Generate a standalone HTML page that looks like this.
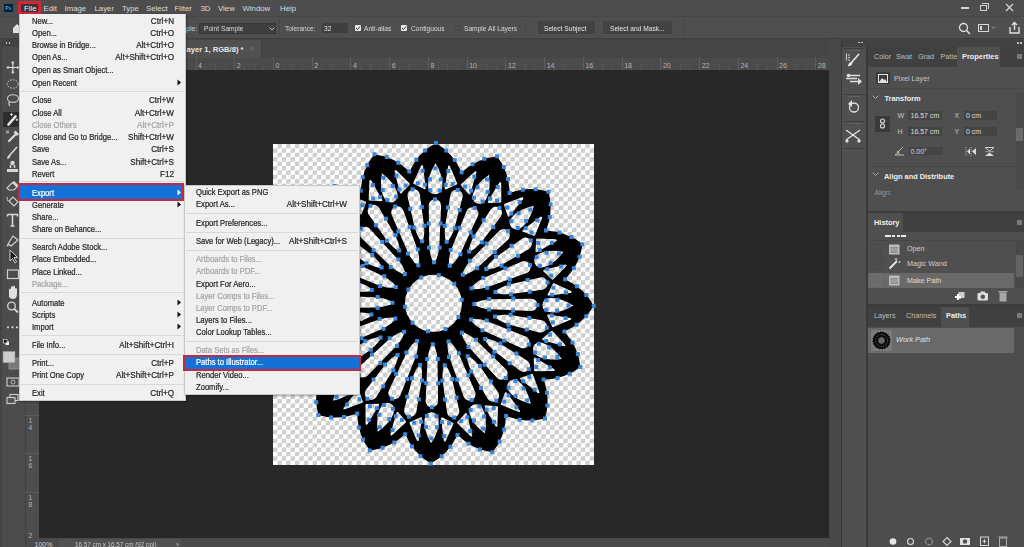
<!DOCTYPE html>
<html><head><meta charset="utf-8"><style>
*{margin:0;padding:0;box-sizing:border-box}
html,body{width:1024px;height:547px;overflow:hidden;background:#535353;font-family:"Liberation Sans",sans-serif;position:relative}
.a{position:absolute}
.t{position:absolute;white-space:nowrap;line-height:1}
svg{position:absolute;overflow:visible}
</style></head><body>
<div class="a" style="left:0px;top:0px;width:1024px;height:16px;background:#4d4d4d;"></div>
<div class="a" style="left:0px;top:16px;width:1024px;height:1px;background:#474747;"></div>
<div class="a" style="left:0px;top:17px;width:1024px;height:21px;background:#4f4f4f;"></div>
<div class="a" style="left:0px;top:38px;width:1024px;height:1px;background:#3e3e3e;"></div>
<div class="a" style="left:20px;top:39px;width:809px;height:19px;background:#454545;"></div>
<div class="a" style="left:20px;top:40px;width:241px;height:18px;background:#505050;"></div>
<div class="a" style="left:261px;top:40px;width:1px;height:18px;background:#3d3d3d;"></div>
<div class="a" style="left:25px;top:58px;width:804px;height:12px;background:#4b4b4b;"></div>
<div class="a" style="left:26px;top:70px;width:13px;height:468px;background:#4d4d4d;"></div>
<div class="a" style="left:39px;top:70px;width:790px;height:468px;background:#282828;"></div>
<div class="a" style="left:0px;top:39px;width:25px;height:508px;background:#4c4c4c;"></div>
<div class="a" style="left:0px;top:39px;width:1.5px;height:508px;background:#444444;"></div>
<div class="a" style="left:0px;top:39px;width:25px;height:8px;background:#424242;"></div>
<div class="a" style="left:25px;top:39px;width:1px;height:508px;background:#404040;"></div>
<div class="a" style="left:26px;top:538px;width:803px;height:9px;background:#4a4a4a;"></div>
<div class="a" style="left:59px;top:539px;width:122px;height:8px;background:#525252;"></div>
<div class="a" style="left:829px;top:39px;width:12px;height:508px;background:#484848;"></div>
<div class="a" style="left:841px;top:39px;width:26px;height:508px;background:#505050;"></div>
<div class="a" style="left:841px;top:39px;width:183px;height:8px;background:#424242;"></div>
<div class="a" style="left:841px;top:39px;width:1px;height:508px;background:#3a3a3a;"></div>
<div class="a" style="left:866px;top:47px;width:2px;height:500px;background:#3a3a3a;"></div>
<div class="a" style="left:868px;top:47px;width:156px;height:20px;background:#404040;"></div>
<div class="a" style="left:957px;top:47px;width:43px;height:20px;background:#4f4f4f;"></div>
<div class="a" style="left:868px;top:67px;width:156px;height:144px;background:#4f4f4f;"></div>
<div class="a" style="left:868px;top:211px;width:156px;height:2px;background:#3c3c3c;"></div>
<div class="a" style="left:868px;top:213px;width:156px;height:19px;background:#404040;"></div>
<div class="a" style="left:868px;top:213px;width:35px;height:19px;background:#4f4f4f;"></div>
<div class="a" style="left:868px;top:232px;width:156px;height:72px;background:#4f4f4f;"></div>
<div class="a" style="left:868px;top:304px;width:156px;height:3px;background:#3c3c3c;"></div>
<div class="a" style="left:868px;top:307px;width:156px;height:20px;background:#404040;"></div>
<div class="a" style="left:941px;top:307px;width:28px;height:20px;background:#4f4f4f;"></div>
<div class="a" style="left:868px;top:327px;width:156px;height:220px;background:#4d4d4d;"></div>
<div class="a" style="left:17.8px;top:0.8px;width:23.1px;height:12.9px;background:#3a3434;border:3px solid #d0283a;border-bottom-width:2.4px"></div>
<div class="a" style="left:4px;top:4px;width:9px;height:8px;background:#001e36;border-radius:1px"></div>
<div class="t" style="left:5.20px;top:6.20px;font-size:5.2px;color:#31a8ff;font-weight:bold;">Ps</div>
<div class="t" style="left:24.00px;top:5.30px;font-size:7.8px;color:#f0f0f0;">File</div>
<div class="t" style="left:43.50px;top:5.30px;font-size:7.8px;color:#dcdcdc;">Edit</div>
<div class="t" style="left:64.50px;top:5.30px;font-size:7.8px;color:#dcdcdc;">Image</div>
<div class="t" style="left:94.50px;top:5.30px;font-size:7.8px;color:#dcdcdc;">Layer</div>
<div class="t" style="left:122.00px;top:5.30px;font-size:7.8px;color:#dcdcdc;">Type</div>
<div class="t" style="left:146.00px;top:5.30px;font-size:7.8px;color:#dcdcdc;">Select</div>
<div class="t" style="left:174.50px;top:5.30px;font-size:7.8px;color:#dcdcdc;">Filter</div>
<div class="t" style="left:200.50px;top:5.30px;font-size:7.8px;color:#dcdcdc;">3D</div>
<div class="t" style="left:218.00px;top:5.30px;font-size:7.8px;color:#dcdcdc;">View</div>
<div class="t" style="left:242.50px;top:5.30px;font-size:7.8px;color:#dcdcdc;">Window</div>
<div class="t" style="left:280.00px;top:5.30px;font-size:7.8px;color:#dcdcdc;">Help</div>
<div class="a" style="left:961px;top:7px;width:8px;height:1.5px;background:#d8d8d8;"></div>
<div class="a" style="left:980px;top:5px;width:7px;height:6px;background:transparent;border:1px solid #d0d0d0"></div>
<div class="a" style="left:982px;top:3px;width:7px;height:6px;background:transparent;border-top:1px solid #d0d0d0;border-right:1px solid #d0d0d0"></div>
<svg style="left:1005px;top:3px" width="9" height="9"><path d="M1 1L8 8M8 1L1 8" stroke="#d8d8d8" stroke-width="1.2"/></svg>
<svg style="left:13px;top:24px" width="8" height="10"><path d="M4 0L8 4V9H0V4Z" fill="#e0e0e0"/></svg>
<div class="t" style="left:186.00px;top:25.20px;font-size:7px;color:#c8c8c8;">ple:</div>
<div class="a" style="left:199px;top:22.5px;width:77px;height:11.5px;background:#3f3f3f;border:1px solid #383838"></div>
<div class="t" style="left:204.00px;top:25.00px;font-size:7.3px;color:#d8d8d8;transform:scaleX(0.91);transform-origin:0 0;">Point Sample</div>
<svg style="left:269px;top:27px" width="6" height="4"><path d="M0.5 0.5L3 3L5.5 0.5" stroke="#bbb" fill="none"/></svg>
<div class="a" style="left:279px;top:19px;width:1px;height:17px;background:#474747;"></div>
<div class="t" style="left:285.00px;top:24.60px;font-size:7.3px;color:#d2d2d2;transform:scaleX(0.91);transform-origin:0 0;">Tolerance:</div>
<div class="a" style="left:321.5px;top:23px;width:26.5px;height:10px;background:#3f3f3f;"></div>
<div class="t" style="left:323.50px;top:24.80px;font-size:7.3px;color:#e6e6e6;transform:scaleX(0.91);transform-origin:0 0;">32</div>
<div class="a" style="left:354.5px;top:24.5px;width:6.5px;height:6.5px;background:#e8e8e8;border-radius:1px"></div>
<svg style="left:355px;top:25px" width="6" height="6"><path d="M1 3L2.5 4.5L5 1.5" stroke="#333" stroke-width="1" fill="none"/></svg>
<div class="t" style="left:364.00px;top:25.00px;font-size:7.3px;color:#d8d8d8;transform:scaleX(0.91);transform-origin:0 0;">Anti-alias</div>
<div class="a" style="left:400.5px;top:24.5px;width:6.5px;height:6.5px;background:#e8e8e8;border-radius:1px"></div>
<svg style="left:401px;top:25px" width="6" height="6"><path d="M1 3L2.5 4.5L5 1.5" stroke="#333" stroke-width="1" fill="none"/></svg>
<div class="t" style="left:410.50px;top:25.00px;font-size:7.3px;color:#d8d8d8;transform:scaleX(0.91);transform-origin:0 0;">Contiguous</div>
<div class="a" style="left:454.5px;top:24.5px;width:6px;height:6px;background:transparent;border:1px solid #444;border-radius:50%"></div>
<div class="t" style="left:463.50px;top:25.00px;font-size:7.3px;color:#d8d8d8;transform:scaleX(0.91);transform-origin:0 0;">Sample All Layers</div>
<div class="a" style="left:525px;top:19px;width:1px;height:17px;background:#474747;"></div>
<div class="a" style="left:537.5px;top:21.3px;width:57px;height:12.5px;background:#424242;"></div>
<div class="t" style="left:544.00px;top:24.80px;font-size:7.3px;color:#e6e6e6;transform:scaleX(0.91);transform-origin:0 0;">Select Subject</div>
<div class="a" style="left:602.7px;top:21.3px;width:69px;height:12.5px;background:#424242;"></div>
<div class="t" style="left:609.70px;top:24.80px;font-size:7.3px;color:#e6e6e6;transform:scaleX(0.91);transform-origin:0 0;">Select and Mask...</div>
<div class="a" style="left:683px;top:19px;width:1px;height:17px;background:#474747;"></div>
<svg style="left:958px;top:22px" width="14" height="13"><circle cx="5.5" cy="5.5" r="4" stroke="#e0e0e0" stroke-width="1.3" fill="none"/><path d="M8.5 8.5L12 12" stroke="#e0e0e0" stroke-width="1.5"/></svg>
<div class="a" style="left:978px;top:24px;width:11px;height:8px;background:transparent;border:1px solid #d8d8d8"></div>
<div class="a" style="left:980px;top:26px;width:2px;height:4px;background:#d8d8d8;"></div>
<svg style="left:991px;top:26px" width="5" height="4"><path d="M0.5 0.5L2.5 2.5L4.5 0.5" stroke="#999" fill="none"/></svg>
<svg style="left:1008px;top:21px" width="13" height="13"><path d="M2 6V12H11V6" stroke="#e0e0e0" stroke-width="1.4" fill="none"/><path d="M6.5 9V1.5M4 4L6.5 1.5L9 4" stroke="#e0e0e0" stroke-width="1.4" fill="none"/></svg>
<div class="a" style="left:196px;top:57px;width:1px;height:13px;background:#5c5c5c;"></div>
<div class="a" style="left:205px;top:67px;width:1px;height:3px;background:#575757;"></div>
<div class="a" style="left:215px;top:64px;width:1px;height:6px;background:#575757;"></div>
<div class="a" style="left:225px;top:67px;width:1px;height:3px;background:#575757;"></div>
<div class="t" style="left:198.02px;top:61.50px;font-size:7px;color:#b4b4b4;">4</div>
<div class="a" style="left:234px;top:57px;width:1px;height:13px;background:#5c5c5c;"></div>
<div class="a" style="left:244px;top:67px;width:1px;height:3px;background:#575757;"></div>
<div class="a" style="left:254px;top:64px;width:1px;height:6px;background:#575757;"></div>
<div class="a" style="left:263px;top:67px;width:1px;height:3px;background:#575757;"></div>
<div class="t" style="left:236.76px;top:61.50px;font-size:7px;color:#b4b4b4;">2</div>
<div class="a" style="left:273px;top:57px;width:1px;height:13px;background:#5c5c5c;"></div>
<div class="a" style="left:283px;top:67px;width:1px;height:3px;background:#575757;"></div>
<div class="a" style="left:292px;top:64px;width:1px;height:6px;background:#575757;"></div>
<div class="a" style="left:302px;top:67px;width:1px;height:3px;background:#575757;"></div>
<div class="t" style="left:275.50px;top:61.50px;font-size:7px;color:#b4b4b4;">0</div>
<div class="a" style="left:312px;top:57px;width:1px;height:13px;background:#5c5c5c;"></div>
<div class="a" style="left:321px;top:67px;width:1px;height:3px;background:#575757;"></div>
<div class="a" style="left:331px;top:64px;width:1px;height:6px;background:#575757;"></div>
<div class="a" style="left:341px;top:67px;width:1px;height:3px;background:#575757;"></div>
<div class="t" style="left:314.24px;top:61.50px;font-size:7px;color:#b4b4b4;">2</div>
<div class="a" style="left:350px;top:57px;width:1px;height:13px;background:#5c5c5c;"></div>
<div class="a" style="left:360px;top:67px;width:1px;height:3px;background:#575757;"></div>
<div class="a" style="left:370px;top:64px;width:1px;height:6px;background:#575757;"></div>
<div class="a" style="left:380px;top:67px;width:1px;height:3px;background:#575757;"></div>
<div class="t" style="left:352.98px;top:61.50px;font-size:7px;color:#b4b4b4;">4</div>
<div class="a" style="left:389px;top:57px;width:1px;height:13px;background:#5c5c5c;"></div>
<div class="a" style="left:399px;top:67px;width:1px;height:3px;background:#575757;"></div>
<div class="a" style="left:409px;top:64px;width:1px;height:6px;background:#575757;"></div>
<div class="a" style="left:418px;top:67px;width:1px;height:3px;background:#575757;"></div>
<div class="t" style="left:391.72px;top:61.50px;font-size:7px;color:#b4b4b4;">6</div>
<div class="a" style="left:428px;top:57px;width:1px;height:13px;background:#5c5c5c;"></div>
<div class="a" style="left:438px;top:67px;width:1px;height:3px;background:#575757;"></div>
<div class="a" style="left:447px;top:64px;width:1px;height:6px;background:#575757;"></div>
<div class="a" style="left:457px;top:67px;width:1px;height:3px;background:#575757;"></div>
<div class="t" style="left:430.46px;top:61.50px;font-size:7px;color:#b4b4b4;">8</div>
<div class="a" style="left:467px;top:57px;width:1px;height:13px;background:#5c5c5c;"></div>
<div class="a" style="left:476px;top:67px;width:1px;height:3px;background:#575757;"></div>
<div class="a" style="left:486px;top:64px;width:1px;height:6px;background:#575757;"></div>
<div class="a" style="left:496px;top:67px;width:1px;height:3px;background:#575757;"></div>
<div class="t" style="left:469.20px;top:61.50px;font-size:7px;color:#b4b4b4;">10</div>
<div class="a" style="left:505px;top:57px;width:1px;height:13px;background:#5c5c5c;"></div>
<div class="a" style="left:515px;top:67px;width:1px;height:3px;background:#575757;"></div>
<div class="a" style="left:525px;top:64px;width:1px;height:6px;background:#575757;"></div>
<div class="a" style="left:534px;top:67px;width:1px;height:3px;background:#575757;"></div>
<div class="t" style="left:507.94px;top:61.50px;font-size:7px;color:#b4b4b4;">12</div>
<div class="a" style="left:544px;top:57px;width:1px;height:13px;background:#5c5c5c;"></div>
<div class="a" style="left:554px;top:67px;width:1px;height:3px;background:#575757;"></div>
<div class="a" style="left:564px;top:64px;width:1px;height:6px;background:#575757;"></div>
<div class="a" style="left:573px;top:67px;width:1px;height:3px;background:#575757;"></div>
<div class="t" style="left:546.68px;top:61.50px;font-size:7px;color:#b4b4b4;">14</div>
<div class="a" style="left:583px;top:57px;width:1px;height:13px;background:#5c5c5c;"></div>
<div class="a" style="left:593px;top:67px;width:1px;height:3px;background:#575757;"></div>
<div class="a" style="left:602px;top:64px;width:1px;height:6px;background:#575757;"></div>
<div class="a" style="left:612px;top:67px;width:1px;height:3px;background:#575757;"></div>
<div class="t" style="left:585.42px;top:61.50px;font-size:7px;color:#b4b4b4;">16</div>
<div class="a" style="left:622px;top:57px;width:1px;height:13px;background:#5c5c5c;"></div>
<div class="a" style="left:631px;top:67px;width:1px;height:3px;background:#575757;"></div>
<div class="a" style="left:641px;top:64px;width:1px;height:6px;background:#575757;"></div>
<div class="a" style="left:651px;top:67px;width:1px;height:3px;background:#575757;"></div>
<div class="t" style="left:624.16px;top:61.50px;font-size:7px;color:#b4b4b4;">18</div>
<div class="a" style="left:660px;top:57px;width:1px;height:13px;background:#5c5c5c;"></div>
<div class="a" style="left:670px;top:67px;width:1px;height:3px;background:#575757;"></div>
<div class="a" style="left:680px;top:64px;width:1px;height:6px;background:#575757;"></div>
<div class="a" style="left:689px;top:67px;width:1px;height:3px;background:#575757;"></div>
<div class="t" style="left:662.90px;top:61.50px;font-size:7px;color:#b4b4b4;">20</div>
<div class="a" style="left:699px;top:57px;width:1px;height:13px;background:#5c5c5c;"></div>
<div class="a" style="left:709px;top:67px;width:1px;height:3px;background:#575757;"></div>
<div class="a" style="left:719px;top:64px;width:1px;height:6px;background:#575757;"></div>
<div class="a" style="left:728px;top:67px;width:1px;height:3px;background:#575757;"></div>
<div class="t" style="left:701.64px;top:61.50px;font-size:7px;color:#b4b4b4;">22</div>
<div class="a" style="left:738px;top:57px;width:1px;height:13px;background:#5c5c5c;"></div>
<div class="a" style="left:748px;top:67px;width:1px;height:3px;background:#575757;"></div>
<div class="a" style="left:757px;top:64px;width:1px;height:6px;background:#575757;"></div>
<div class="a" style="left:767px;top:67px;width:1px;height:3px;background:#575757;"></div>
<div class="t" style="left:740.38px;top:61.50px;font-size:7px;color:#b4b4b4;">24</div>
<div class="a" style="left:777px;top:57px;width:1px;height:13px;background:#5c5c5c;"></div>
<div class="a" style="left:786px;top:67px;width:1px;height:3px;background:#575757;"></div>
<div class="a" style="left:796px;top:64px;width:1px;height:6px;background:#575757;"></div>
<div class="a" style="left:806px;top:67px;width:1px;height:3px;background:#575757;"></div>
<div class="t" style="left:779.12px;top:61.50px;font-size:7px;color:#b4b4b4;">26</div>
<div class="a" style="left:815px;top:57px;width:1px;height:13px;background:#5c5c5c;"></div>
<div class="a" style="left:825px;top:67px;width:1px;height:3px;background:#575757;"></div>
<div class="t" style="left:817.86px;top:61.50px;font-size:7px;color:#b4b4b4;">28</div>
<div class="a" style="left:25px;top:415px;width:14px;height:1px;background:#5c5c5c;"></div>
<div class="t" style="left:28.50px;top:417.68px;font-size:6.8px;color:#b4b4b4;">1</div>
<div class="t" style="left:28.50px;top:424.68px;font-size:6.8px;color:#b4b4b4;">4</div>
<div class="a" style="left:25px;top:453px;width:14px;height:1px;background:#5c5c5c;"></div>
<div class="t" style="left:28.50px;top:456.42px;font-size:6.8px;color:#b4b4b4;">1</div>
<div class="t" style="left:28.50px;top:463.42px;font-size:6.8px;color:#b4b4b4;">6</div>
<div class="a" style="left:25px;top:492px;width:14px;height:1px;background:#5c5c5c;"></div>
<div class="t" style="left:28.50px;top:495.16px;font-size:6.8px;color:#b4b4b4;">1</div>
<div class="t" style="left:28.50px;top:502.16px;font-size:6.8px;color:#b4b4b4;">8</div>
<div class="t" style="left:28.50px;top:533.00px;font-size:6.8px;color:#b4b4b4;">2</div>
<div class="t" style="left:34.50px;top:540.50px;font-size:7px;color:#d0d0d0;">100%</div>
<div class="t" style="left:75.00px;top:540.50px;font-size:7px;color:#c8c8c8;transform:scaleX(0.9);transform-origin:0 0;">16.57 cm x 16.57 cm (92 ppi)</div>
<div class="t" style="left:176.00px;top:540.50px;font-size:8px;color:#c8c8c8;">&#8250;</div>
<div class="a" style="left:273px;top:143.5px;width:321px;height:321.5px;background-color:#fff;background-image:linear-gradient(45deg,#cccccc 25%,transparent 25%,transparent 75%,#cccccc 75%),linear-gradient(45deg,#cccccc 25%,transparent 25%,transparent 75%,#cccccc 75%);background-size:8.8px 8.8px;background-position:0 0,4.4px 4.4px"></div>
<svg style="left:0;top:0" width="1024" height="547" viewBox="0 0 1024 547"><defs><mask id="mk" maskUnits="userSpaceOnUse" x="0" y="0" width="1024" height="547"><path d="M409.3 171.5Q418.6 152.0 435.9 143.0Q453.0 152.6 461.6 172.3Q477.6 157.9 497.1 156.2Q509.2 171.5 509.6 193.1Q529.9 185.8 548.5 191.7Q553.8 210.6 546.0 230.6Q567.5 231.7 582.4 244.3Q580.2 263.7 565.2 279.2Q584.7 288.5 593.7 305.8Q584.1 322.9 564.4 331.5Q578.8 347.5 580.5 367.0Q565.2 379.1 543.6 379.5Q550.9 399.8 545.0 418.4Q526.1 423.7 506.1 415.9Q505.0 437.4 492.4 452.3Q473.0 450.1 457.5 435.1Q448.2 454.6 430.9 463.6Q413.8 454.0 405.2 434.3Q389.2 448.7 369.7 450.4Q357.6 435.1 357.2 413.5Q336.9 420.8 318.3 414.9Q313.0 396.0 320.8 376.0Q299.3 374.9 284.4 362.3Q286.6 342.9 301.6 327.4Q282.1 318.1 273.1 300.8Q282.7 283.7 302.4 275.1Q288.0 259.1 286.3 239.6Q301.6 227.5 323.2 227.1Q315.9 206.8 321.8 188.2Q340.7 182.9 360.7 190.7Q361.8 169.2 374.4 154.3Q393.8 156.5 409.3 171.5Z" fill="#fff"/><circle cx="433.4" cy="303.3" r="28.5" fill="#000"/><g fill="#000"><path transform="translate(433.4 303.3) rotate(0.90)" d="M0 -40.00Q-3.75 -45.00 -5.00 -56.00L-6.20 -97.80A6.2 6.2 0 0 1 6.20 -97.80L5.00 -56.00Q3.75 -45.00 0 -40.00Z"/><path transform="translate(433.4 303.3) rotate(12.15)" d="M0 -62.00Q-3.60 -67.00 -4.80 -78.00L-6.20 -109.80A6.2 6.2 0 0 1 6.20 -109.80L4.80 -78.00Q3.60 -67.00 0 -62.00Z"/><path transform="translate(433.4 303.3) rotate(0.90)" d="M0 -140Q8.5 -126 7 -116A7 7 0 0 1 -7 -116Q-8.5 -126 0 -140Z"/><path transform="translate(433.4 303.3) rotate(0.90)" d="M-10.5 -115L-21.0 -120L-13.5 -137Z" stroke="#000" stroke-width="2" stroke-linejoin="round"/><path transform="translate(433.4 303.3) rotate(0.90)" d="M10.5 -115L21.0 -120L13.5 -137Z" stroke="#000" stroke-width="2" stroke-linejoin="round"/><path transform="translate(433.4 303.3) rotate(23.40)" d="M0 -40.00Q-3.75 -45.00 -5.00 -56.00L-6.20 -97.80A6.2 6.2 0 0 1 6.20 -97.80L5.00 -56.00Q3.75 -45.00 0 -40.00Z"/><path transform="translate(433.4 303.3) rotate(34.65)" d="M0 -62.00Q-3.60 -67.00 -4.80 -78.00L-6.20 -109.80A6.2 6.2 0 0 1 6.20 -109.80L4.80 -78.00Q3.60 -67.00 0 -62.00Z"/><path transform="translate(433.4 303.3) rotate(23.40)" d="M0 -140Q8.5 -126 7 -116A7 7 0 0 1 -7 -116Q-8.5 -126 0 -140Z"/><path transform="translate(433.4 303.3) rotate(23.40)" d="M-10.5 -115L-21.0 -120L-13.5 -137Z" stroke="#000" stroke-width="2" stroke-linejoin="round"/><path transform="translate(433.4 303.3) rotate(23.40)" d="M10.5 -115L21.0 -120L13.5 -137Z" stroke="#000" stroke-width="2" stroke-linejoin="round"/><path transform="translate(433.4 303.3) rotate(45.90)" d="M0 -40.00Q-3.75 -45.00 -5.00 -56.00L-6.20 -97.80A6.2 6.2 0 0 1 6.20 -97.80L5.00 -56.00Q3.75 -45.00 0 -40.00Z"/><path transform="translate(433.4 303.3) rotate(57.15)" d="M0 -62.00Q-3.60 -67.00 -4.80 -78.00L-6.20 -109.80A6.2 6.2 0 0 1 6.20 -109.80L4.80 -78.00Q3.60 -67.00 0 -62.00Z"/><path transform="translate(433.4 303.3) rotate(45.90)" d="M0 -140Q8.5 -126 7 -116A7 7 0 0 1 -7 -116Q-8.5 -126 0 -140Z"/><path transform="translate(433.4 303.3) rotate(45.90)" d="M-10.5 -115L-21.0 -120L-13.5 -137Z" stroke="#000" stroke-width="2" stroke-linejoin="round"/><path transform="translate(433.4 303.3) rotate(45.90)" d="M10.5 -115L21.0 -120L13.5 -137Z" stroke="#000" stroke-width="2" stroke-linejoin="round"/><path transform="translate(433.4 303.3) rotate(68.40)" d="M0 -40.00Q-3.75 -45.00 -5.00 -56.00L-6.20 -97.80A6.2 6.2 0 0 1 6.20 -97.80L5.00 -56.00Q3.75 -45.00 0 -40.00Z"/><path transform="translate(433.4 303.3) rotate(79.65)" d="M0 -62.00Q-3.60 -67.00 -4.80 -78.00L-6.20 -109.80A6.2 6.2 0 0 1 6.20 -109.80L4.80 -78.00Q3.60 -67.00 0 -62.00Z"/><path transform="translate(433.4 303.3) rotate(68.40)" d="M0 -140Q8.5 -126 7 -116A7 7 0 0 1 -7 -116Q-8.5 -126 0 -140Z"/><path transform="translate(433.4 303.3) rotate(68.40)" d="M-10.5 -115L-21.0 -120L-13.5 -137Z" stroke="#000" stroke-width="2" stroke-linejoin="round"/><path transform="translate(433.4 303.3) rotate(68.40)" d="M10.5 -115L21.0 -120L13.5 -137Z" stroke="#000" stroke-width="2" stroke-linejoin="round"/><path transform="translate(433.4 303.3) rotate(90.90)" d="M0 -40.00Q-3.75 -45.00 -5.00 -56.00L-6.20 -97.80A6.2 6.2 0 0 1 6.20 -97.80L5.00 -56.00Q3.75 -45.00 0 -40.00Z"/><path transform="translate(433.4 303.3) rotate(102.15)" d="M0 -62.00Q-3.60 -67.00 -4.80 -78.00L-6.20 -109.80A6.2 6.2 0 0 1 6.20 -109.80L4.80 -78.00Q3.60 -67.00 0 -62.00Z"/><path transform="translate(433.4 303.3) rotate(90.90)" d="M0 -140Q8.5 -126 7 -116A7 7 0 0 1 -7 -116Q-8.5 -126 0 -140Z"/><path transform="translate(433.4 303.3) rotate(90.90)" d="M-10.5 -115L-21.0 -120L-13.5 -137Z" stroke="#000" stroke-width="2" stroke-linejoin="round"/><path transform="translate(433.4 303.3) rotate(90.90)" d="M10.5 -115L21.0 -120L13.5 -137Z" stroke="#000" stroke-width="2" stroke-linejoin="round"/><path transform="translate(433.4 303.3) rotate(113.40)" d="M0 -40.00Q-3.75 -45.00 -5.00 -56.00L-6.20 -97.80A6.2 6.2 0 0 1 6.20 -97.80L5.00 -56.00Q3.75 -45.00 0 -40.00Z"/><path transform="translate(433.4 303.3) rotate(124.65)" d="M0 -62.00Q-3.60 -67.00 -4.80 -78.00L-6.20 -109.80A6.2 6.2 0 0 1 6.20 -109.80L4.80 -78.00Q3.60 -67.00 0 -62.00Z"/><path transform="translate(433.4 303.3) rotate(113.40)" d="M0 -140Q8.5 -126 7 -116A7 7 0 0 1 -7 -116Q-8.5 -126 0 -140Z"/><path transform="translate(433.4 303.3) rotate(113.40)" d="M-10.5 -115L-21.0 -120L-13.5 -137Z" stroke="#000" stroke-width="2" stroke-linejoin="round"/><path transform="translate(433.4 303.3) rotate(113.40)" d="M10.5 -115L21.0 -120L13.5 -137Z" stroke="#000" stroke-width="2" stroke-linejoin="round"/><path transform="translate(433.4 303.3) rotate(135.90)" d="M0 -40.00Q-3.75 -45.00 -5.00 -56.00L-6.20 -97.80A6.2 6.2 0 0 1 6.20 -97.80L5.00 -56.00Q3.75 -45.00 0 -40.00Z"/><path transform="translate(433.4 303.3) rotate(147.15)" d="M0 -62.00Q-3.60 -67.00 -4.80 -78.00L-6.20 -109.80A6.2 6.2 0 0 1 6.20 -109.80L4.80 -78.00Q3.60 -67.00 0 -62.00Z"/><path transform="translate(433.4 303.3) rotate(135.90)" d="M0 -140Q8.5 -126 7 -116A7 7 0 0 1 -7 -116Q-8.5 -126 0 -140Z"/><path transform="translate(433.4 303.3) rotate(135.90)" d="M-10.5 -115L-21.0 -120L-13.5 -137Z" stroke="#000" stroke-width="2" stroke-linejoin="round"/><path transform="translate(433.4 303.3) rotate(135.90)" d="M10.5 -115L21.0 -120L13.5 -137Z" stroke="#000" stroke-width="2" stroke-linejoin="round"/><path transform="translate(433.4 303.3) rotate(158.40)" d="M0 -40.00Q-3.75 -45.00 -5.00 -56.00L-6.20 -97.80A6.2 6.2 0 0 1 6.20 -97.80L5.00 -56.00Q3.75 -45.00 0 -40.00Z"/><path transform="translate(433.4 303.3) rotate(169.65)" d="M0 -62.00Q-3.60 -67.00 -4.80 -78.00L-6.20 -109.80A6.2 6.2 0 0 1 6.20 -109.80L4.80 -78.00Q3.60 -67.00 0 -62.00Z"/><path transform="translate(433.4 303.3) rotate(158.40)" d="M0 -140Q8.5 -126 7 -116A7 7 0 0 1 -7 -116Q-8.5 -126 0 -140Z"/><path transform="translate(433.4 303.3) rotate(158.40)" d="M-10.5 -115L-21.0 -120L-13.5 -137Z" stroke="#000" stroke-width="2" stroke-linejoin="round"/><path transform="translate(433.4 303.3) rotate(158.40)" d="M10.5 -115L21.0 -120L13.5 -137Z" stroke="#000" stroke-width="2" stroke-linejoin="round"/><path transform="translate(433.4 303.3) rotate(180.90)" d="M0 -40.00Q-3.75 -45.00 -5.00 -56.00L-6.20 -97.80A6.2 6.2 0 0 1 6.20 -97.80L5.00 -56.00Q3.75 -45.00 0 -40.00Z"/><path transform="translate(433.4 303.3) rotate(192.15)" d="M0 -62.00Q-3.60 -67.00 -4.80 -78.00L-6.20 -109.80A6.2 6.2 0 0 1 6.20 -109.80L4.80 -78.00Q3.60 -67.00 0 -62.00Z"/><path transform="translate(433.4 303.3) rotate(180.90)" d="M0 -140Q8.5 -126 7 -116A7 7 0 0 1 -7 -116Q-8.5 -126 0 -140Z"/><path transform="translate(433.4 303.3) rotate(180.90)" d="M-10.5 -115L-21.0 -120L-13.5 -137Z" stroke="#000" stroke-width="2" stroke-linejoin="round"/><path transform="translate(433.4 303.3) rotate(180.90)" d="M10.5 -115L21.0 -120L13.5 -137Z" stroke="#000" stroke-width="2" stroke-linejoin="round"/><path transform="translate(433.4 303.3) rotate(203.40)" d="M0 -40.00Q-3.75 -45.00 -5.00 -56.00L-6.20 -97.80A6.2 6.2 0 0 1 6.20 -97.80L5.00 -56.00Q3.75 -45.00 0 -40.00Z"/><path transform="translate(433.4 303.3) rotate(214.65)" d="M0 -62.00Q-3.60 -67.00 -4.80 -78.00L-6.20 -109.80A6.2 6.2 0 0 1 6.20 -109.80L4.80 -78.00Q3.60 -67.00 0 -62.00Z"/><path transform="translate(433.4 303.3) rotate(203.40)" d="M0 -140Q8.5 -126 7 -116A7 7 0 0 1 -7 -116Q-8.5 -126 0 -140Z"/><path transform="translate(433.4 303.3) rotate(203.40)" d="M-10.5 -115L-21.0 -120L-13.5 -137Z" stroke="#000" stroke-width="2" stroke-linejoin="round"/><path transform="translate(433.4 303.3) rotate(203.40)" d="M10.5 -115L21.0 -120L13.5 -137Z" stroke="#000" stroke-width="2" stroke-linejoin="round"/><path transform="translate(433.4 303.3) rotate(225.90)" d="M0 -40.00Q-3.75 -45.00 -5.00 -56.00L-6.20 -97.80A6.2 6.2 0 0 1 6.20 -97.80L5.00 -56.00Q3.75 -45.00 0 -40.00Z"/><path transform="translate(433.4 303.3) rotate(237.15)" d="M0 -62.00Q-3.60 -67.00 -4.80 -78.00L-6.20 -109.80A6.2 6.2 0 0 1 6.20 -109.80L4.80 -78.00Q3.60 -67.00 0 -62.00Z"/><path transform="translate(433.4 303.3) rotate(225.90)" d="M0 -140Q8.5 -126 7 -116A7 7 0 0 1 -7 -116Q-8.5 -126 0 -140Z"/><path transform="translate(433.4 303.3) rotate(225.90)" d="M-10.5 -115L-21.0 -120L-13.5 -137Z" stroke="#000" stroke-width="2" stroke-linejoin="round"/><path transform="translate(433.4 303.3) rotate(225.90)" d="M10.5 -115L21.0 -120L13.5 -137Z" stroke="#000" stroke-width="2" stroke-linejoin="round"/><path transform="translate(433.4 303.3) rotate(248.40)" d="M0 -40.00Q-3.75 -45.00 -5.00 -56.00L-6.20 -97.80A6.2 6.2 0 0 1 6.20 -97.80L5.00 -56.00Q3.75 -45.00 0 -40.00Z"/><path transform="translate(433.4 303.3) rotate(259.65)" d="M0 -62.00Q-3.60 -67.00 -4.80 -78.00L-6.20 -109.80A6.2 6.2 0 0 1 6.20 -109.80L4.80 -78.00Q3.60 -67.00 0 -62.00Z"/><path transform="translate(433.4 303.3) rotate(248.40)" d="M0 -140Q8.5 -126 7 -116A7 7 0 0 1 -7 -116Q-8.5 -126 0 -140Z"/><path transform="translate(433.4 303.3) rotate(248.40)" d="M-10.5 -115L-21.0 -120L-13.5 -137Z" stroke="#000" stroke-width="2" stroke-linejoin="round"/><path transform="translate(433.4 303.3) rotate(248.40)" d="M10.5 -115L21.0 -120L13.5 -137Z" stroke="#000" stroke-width="2" stroke-linejoin="round"/><path transform="translate(433.4 303.3) rotate(270.90)" d="M0 -40.00Q-3.75 -45.00 -5.00 -56.00L-6.20 -97.80A6.2 6.2 0 0 1 6.20 -97.80L5.00 -56.00Q3.75 -45.00 0 -40.00Z"/><path transform="translate(433.4 303.3) rotate(282.15)" d="M0 -62.00Q-3.60 -67.00 -4.80 -78.00L-6.20 -109.80A6.2 6.2 0 0 1 6.20 -109.80L4.80 -78.00Q3.60 -67.00 0 -62.00Z"/><path transform="translate(433.4 303.3) rotate(270.90)" d="M0 -140Q8.5 -126 7 -116A7 7 0 0 1 -7 -116Q-8.5 -126 0 -140Z"/><path transform="translate(433.4 303.3) rotate(270.90)" d="M-10.5 -115L-21.0 -120L-13.5 -137Z" stroke="#000" stroke-width="2" stroke-linejoin="round"/><path transform="translate(433.4 303.3) rotate(270.90)" d="M10.5 -115L21.0 -120L13.5 -137Z" stroke="#000" stroke-width="2" stroke-linejoin="round"/><path transform="translate(433.4 303.3) rotate(293.40)" d="M0 -40.00Q-3.75 -45.00 -5.00 -56.00L-6.20 -97.80A6.2 6.2 0 0 1 6.20 -97.80L5.00 -56.00Q3.75 -45.00 0 -40.00Z"/><path transform="translate(433.4 303.3) rotate(304.65)" d="M0 -62.00Q-3.60 -67.00 -4.80 -78.00L-6.20 -109.80A6.2 6.2 0 0 1 6.20 -109.80L4.80 -78.00Q3.60 -67.00 0 -62.00Z"/><path transform="translate(433.4 303.3) rotate(293.40)" d="M0 -140Q8.5 -126 7 -116A7 7 0 0 1 -7 -116Q-8.5 -126 0 -140Z"/><path transform="translate(433.4 303.3) rotate(293.40)" d="M-10.5 -115L-21.0 -120L-13.5 -137Z" stroke="#000" stroke-width="2" stroke-linejoin="round"/><path transform="translate(433.4 303.3) rotate(293.40)" d="M10.5 -115L21.0 -120L13.5 -137Z" stroke="#000" stroke-width="2" stroke-linejoin="round"/><path transform="translate(433.4 303.3) rotate(315.90)" d="M0 -40.00Q-3.75 -45.00 -5.00 -56.00L-6.20 -97.80A6.2 6.2 0 0 1 6.20 -97.80L5.00 -56.00Q3.75 -45.00 0 -40.00Z"/><path transform="translate(433.4 303.3) rotate(327.15)" d="M0 -62.00Q-3.60 -67.00 -4.80 -78.00L-6.20 -109.80A6.2 6.2 0 0 1 6.20 -109.80L4.80 -78.00Q3.60 -67.00 0 -62.00Z"/><path transform="translate(433.4 303.3) rotate(315.90)" d="M0 -140Q8.5 -126 7 -116A7 7 0 0 1 -7 -116Q-8.5 -126 0 -140Z"/><path transform="translate(433.4 303.3) rotate(315.90)" d="M-10.5 -115L-21.0 -120L-13.5 -137Z" stroke="#000" stroke-width="2" stroke-linejoin="round"/><path transform="translate(433.4 303.3) rotate(315.90)" d="M10.5 -115L21.0 -120L13.5 -137Z" stroke="#000" stroke-width="2" stroke-linejoin="round"/><path transform="translate(433.4 303.3) rotate(338.40)" d="M0 -40.00Q-3.75 -45.00 -5.00 -56.00L-6.20 -97.80A6.2 6.2 0 0 1 6.20 -97.80L5.00 -56.00Q3.75 -45.00 0 -40.00Z"/><path transform="translate(433.4 303.3) rotate(349.65)" d="M0 -62.00Q-3.60 -67.00 -4.80 -78.00L-6.20 -109.80A6.2 6.2 0 0 1 6.20 -109.80L4.80 -78.00Q3.60 -67.00 0 -62.00Z"/><path transform="translate(433.4 303.3) rotate(338.40)" d="M0 -140Q8.5 -126 7 -116A7 7 0 0 1 -7 -116Q-8.5 -126 0 -140Z"/><path transform="translate(433.4 303.3) rotate(338.40)" d="M-10.5 -115L-21.0 -120L-13.5 -137Z" stroke="#000" stroke-width="2" stroke-linejoin="round"/><path transform="translate(433.4 303.3) rotate(338.40)" d="M10.5 -115L21.0 -120L13.5 -137Z" stroke="#000" stroke-width="2" stroke-linejoin="round"/></g></mask></defs><rect x="0" y="0" width="1024" height="547" fill="#000" mask="url(#mk)"/><path d="M407.3 169.5h4v4h-4zM433.9 141.0h4v4h-4zM414.3 157.8h4v4h-4zM444.3 148.4h4v4h-4zM423.1 148.4h4v4h-4zM452.8 158.1h4v4h-4zM459.6 170.3h4v4h-4zM495.1 154.2h4v4h-4zM470.5 162.2h4v4h-4zM501.8 165.0h4v4h-4zM482.2 156.8h4v4h-4zM506.0 177.1h4v4h-4zM507.6 191.1h4v4h-4zM546.5 189.7h4v4h-4zM520.8 187.7h4v4h-4zM548.6 202.3h4v4h-4zM533.7 187.2h4v4h-4zM547.8 215.1h4v4h-4zM544.0 228.6h4v4h-4zM580.4 242.3h4v4h-4zM557.5 230.6h4v4h-4zM577.6 254.7h4v4h-4zM569.5 235.1h4v4h-4zM571.9 266.2h4v4h-4zM563.2 277.2h4v4h-4zM591.7 303.8h4v4h-4zM574.9 284.2h4v4h-4zM584.3 314.2h4v4h-4zM584.3 293.0h4v4h-4zM574.6 322.7h4v4h-4zM562.4 329.5h4v4h-4zM578.5 365.0h4v4h-4zM570.5 340.4h4v4h-4zM567.7 371.7h4v4h-4zM575.9 352.1h4v4h-4zM555.6 375.9h4v4h-4zM541.6 377.5h4v4h-4zM543.0 416.4h4v4h-4zM545.0 390.7h4v4h-4zM530.4 418.5h4v4h-4zM545.5 403.6h4v4h-4zM517.6 417.7h4v4h-4zM504.1 413.9h4v4h-4zM490.4 450.3h4v4h-4zM502.1 427.4h4v4h-4zM478.0 447.5h4v4h-4zM497.6 439.4h4v4h-4zM466.5 441.8h4v4h-4zM455.5 433.1h4v4h-4zM428.9 461.6h4v4h-4zM448.5 444.8h4v4h-4zM418.5 454.2h4v4h-4zM439.7 454.2h4v4h-4zM410.0 444.5h4v4h-4zM403.2 432.3h4v4h-4zM367.7 448.4h4v4h-4zM392.3 440.4h4v4h-4zM361.0 437.6h4v4h-4zM380.6 445.8h4v4h-4zM356.8 425.5h4v4h-4zM355.2 411.5h4v4h-4zM316.3 412.9h4v4h-4zM342.0 414.9h4v4h-4zM314.2 400.3h4v4h-4zM329.1 415.4h4v4h-4zM315.0 387.5h4v4h-4zM318.8 374.0h4v4h-4zM282.4 360.3h4v4h-4zM305.3 372.0h4v4h-4zM285.2 347.9h4v4h-4zM293.3 367.5h4v4h-4zM290.9 336.4h4v4h-4zM299.6 325.4h4v4h-4zM271.1 298.8h4v4h-4zM287.9 318.4h4v4h-4zM278.5 288.4h4v4h-4zM278.5 309.6h4v4h-4zM288.2 279.9h4v4h-4zM300.4 273.1h4v4h-4zM284.3 237.6h4v4h-4zM292.3 262.2h4v4h-4zM295.1 230.9h4v4h-4zM286.9 250.5h4v4h-4zM307.2 226.7h4v4h-4zM321.2 225.1h4v4h-4zM319.8 186.2h4v4h-4zM317.8 211.9h4v4h-4zM332.4 184.1h4v4h-4zM317.3 199.0h4v4h-4zM345.2 184.9h4v4h-4zM358.7 188.7h4v4h-4zM372.4 152.3h4v4h-4zM360.7 175.2h4v4h-4zM384.8 155.1h4v4h-4zM365.2 163.2h4v4h-4zM396.3 160.8h4v4h-4zM436.8 273.3h4v4h-4zM452.2 281.8h4v4h-4zM459.7 297.8h4v4h-4zM456.4 315.1h4v4h-4zM443.5 327.1h4v4h-4zM426.0 329.3h4v4h-4zM410.6 320.8h4v4h-4zM403.1 304.8h4v4h-4zM406.4 287.5h4v4h-4zM419.3 275.5h4v4h-4zM432.0 260.3h4v4h-4zM427.0 245.5h4v4h-4zM437.6 245.6h4v4h-4zM426.7 221.4h4v4h-4zM438.6 221.6h4v4h-4zM433.0 197.3h4v4h-4zM444.7 239.7h4v4h-4zM442.8 224.1h4v4h-4zM452.8 226.3h4v4h-4zM446.0 205.4h4v4h-4zM457.6 207.9h4v4h-4zM455.8 187.9h4v4h-4zM433.5 166.3h4v4h-4zM428.4 188.3h4v4h-4zM437.9 188.5h4v4h-4zM427.9 177.3h4v4h-4zM438.8 177.5h4v4h-4zM422.9 182.6h4v4h-4zM415.8 181.3h4v4h-4zM420.7 168.7h4v4h-4zM443.6 182.9h4v4h-4zM450.7 181.9h4v4h-4zM446.2 169.1h4v4h-4zM447.7 263.7h4v4h-4zM448.7 248.0h4v4h-4zM458.4 252.2h4v4h-4zM457.6 225.7h4v4h-4zM468.6 230.5h4v4h-4zM472.7 205.9h4v4h-4zM467.2 249.5h4v4h-4zM471.5 234.4h4v4h-4zM479.8 240.2h4v4h-4zM481.6 218.3h4v4h-4zM491.3 225.0h4v4h-4zM497.4 205.9h4v4h-4zM485.0 177.4h4v4h-4zM471.9 195.8h4v4h-4zM480.6 199.6h4v4h-4zM475.6 185.5h4v4h-4zM485.6 189.8h4v4h-4zM469.0 188.4h4v4h-4zM462.9 184.5h4v4h-4zM472.3 174.7h4v4h-4zM488.0 196.6h4v4h-4zM495.0 198.4h4v4h-4zM495.7 184.9h4v4h-4zM460.8 272.8h4v4h-4zM467.8 258.7h4v4h-4zM475.1 266.3h4v4h-4zM484.5 241.5h4v4h-4zM492.8 250.1h4v4h-4zM506.1 228.9h4v4h-4zM484.3 267.1h4v4h-4zM494.0 254.8h4v4h-4zM499.5 263.4h4v4h-4zM509.5 243.8h4v4h-4zM516.0 253.8h4v4h-4zM528.9 238.4h4v4h-4zM528.3 207.4h4v4h-4zM509.2 219.3h4v4h-4zM515.8 226.1h4v4h-4zM516.6 211.2h4v4h-4zM524.1 219.0h4v4h-4zM509.3 211.4h4v4h-4zM505.2 205.4h4v4h-4zM517.6 200.0h4v4h-4zM523.7 226.2h4v4h-4zM529.5 230.5h4v4h-4zM535.3 218.3h4v4h-4zM469.5 286.2h4v4h-4zM481.3 275.9h4v4h-4zM485.2 285.7h4v4h-4zM503.4 266.4h4v4h-4zM507.8 277.5h4v4h-4zM528.1 263.0h4v4h-4zM493.4 290.0h4v4h-4zM507.1 282.3h4v4h-4zM508.9 292.3h4v4h-4zM525.6 278.1h4v4h-4zM527.7 289.7h4v4h-4zM545.5 280.5h4v4h-4zM556.9 251.6h4v4h-4zM534.6 255.3h4v4h-4zM538.1 264.1h4v4h-4zM544.6 250.7h4v4h-4zM548.6 260.7h4v4h-4zM537.8 248.0h4v4h-4zM536.3 241.0h4v4h-4zM549.8 240.7h4v4h-4zM545.4 267.3h4v4h-4zM549.2 273.5h4v4h-4zM559.2 264.4h4v4h-4zM472.4 301.9h4v4h-4zM487.2 296.9h4v4h-4zM487.1 307.5h4v4h-4zM511.3 296.6h4v4h-4zM511.1 308.5h4v4h-4zM535.4 302.9h4v4h-4zM493.0 314.6h4v4h-4zM508.6 312.7h4v4h-4zM506.4 322.7h4v4h-4zM527.3 315.9h4v4h-4zM524.8 327.5h4v4h-4zM544.8 325.7h4v4h-4zM566.4 303.4h4v4h-4zM544.4 298.3h4v4h-4zM544.2 307.8h4v4h-4zM555.4 297.8h4v4h-4zM555.2 308.7h4v4h-4zM550.1 292.8h4v4h-4zM551.4 285.7h4v4h-4zM564.0 290.6h4v4h-4zM549.8 313.5h4v4h-4zM550.8 320.6h4v4h-4zM563.6 316.1h4v4h-4zM469.0 317.6h4v4h-4zM484.7 318.6h4v4h-4zM480.5 328.3h4v4h-4zM507.0 327.5h4v4h-4zM502.2 338.5h4v4h-4zM526.8 342.6h4v4h-4zM483.2 337.1h4v4h-4zM498.3 341.4h4v4h-4zM492.5 349.7h4v4h-4zM514.4 351.5h4v4h-4zM507.7 361.2h4v4h-4zM526.8 367.3h4v4h-4zM555.3 354.9h4v4h-4zM536.9 341.8h4v4h-4zM533.1 350.5h4v4h-4zM547.2 345.5h4v4h-4zM542.9 355.5h4v4h-4zM544.3 338.9h4v4h-4zM548.2 332.8h4v4h-4zM558.0 342.2h4v4h-4zM536.1 357.9h4v4h-4zM534.3 364.9h4v4h-4zM547.8 365.6h4v4h-4zM459.9 330.7h4v4h-4zM474.0 337.7h4v4h-4zM466.4 345.0h4v4h-4zM491.2 354.4h4v4h-4zM482.6 362.7h4v4h-4zM503.8 376.0h4v4h-4zM465.6 354.2h4v4h-4zM477.9 363.9h4v4h-4zM469.3 369.4h4v4h-4zM488.9 379.4h4v4h-4zM478.9 385.9h4v4h-4zM494.3 398.8h4v4h-4zM525.3 398.2h4v4h-4zM513.4 379.1h4v4h-4zM506.6 385.7h4v4h-4zM521.5 386.5h4v4h-4zM513.7 394.0h4v4h-4zM521.3 379.2h4v4h-4zM527.3 375.1h4v4h-4zM532.7 387.5h4v4h-4zM506.5 393.6h4v4h-4zM502.2 399.4h4v4h-4zM514.4 405.2h4v4h-4zM446.5 339.4h4v4h-4zM456.8 351.2h4v4h-4zM447.0 355.1h4v4h-4zM466.3 373.3h4v4h-4zM455.2 377.7h4v4h-4zM469.7 398.0h4v4h-4zM442.7 363.3h4v4h-4zM450.4 377.0h4v4h-4zM440.4 378.8h4v4h-4zM454.6 395.5h4v4h-4zM443.0 397.6h4v4h-4zM452.2 415.4h4v4h-4zM481.1 426.8h4v4h-4zM477.4 404.5h4v4h-4zM468.6 408.0h4v4h-4zM482.0 414.5h4v4h-4zM472.0 418.5h4v4h-4zM484.7 407.7h4v4h-4zM491.7 406.2h4v4h-4zM492.0 419.7h4v4h-4zM465.4 415.3h4v4h-4zM459.2 419.1h4v4h-4zM468.3 429.1h4v4h-4zM430.8 342.3h4v4h-4zM435.8 357.1h4v4h-4zM425.2 357.0h4v4h-4zM436.1 381.2h4v4h-4zM424.2 381.0h4v4h-4zM429.8 405.3h4v4h-4zM418.1 362.9h4v4h-4zM420.0 378.5h4v4h-4zM410.0 376.3h4v4h-4zM416.8 397.2h4v4h-4zM405.2 394.7h4v4h-4zM407.0 414.7h4v4h-4zM429.3 436.3h4v4h-4zM434.4 414.3h4v4h-4zM424.9 414.1h4v4h-4zM434.9 425.3h4v4h-4zM424.0 425.1h4v4h-4zM439.9 420.0h4v4h-4zM447.0 421.3h4v4h-4zM442.1 433.9h4v4h-4zM419.2 419.7h4v4h-4zM412.1 420.7h4v4h-4zM416.6 433.5h4v4h-4zM415.1 338.9h4v4h-4zM414.1 354.6h4v4h-4zM404.4 350.4h4v4h-4zM405.2 376.9h4v4h-4zM394.2 372.1h4v4h-4zM390.1 396.7h4v4h-4zM395.6 353.1h4v4h-4zM391.3 368.2h4v4h-4zM383.0 362.4h4v4h-4zM381.2 384.3h4v4h-4zM371.5 377.6h4v4h-4zM365.4 396.7h4v4h-4zM377.8 425.2h4v4h-4zM390.9 406.8h4v4h-4zM382.2 403.0h4v4h-4zM387.2 417.1h4v4h-4zM377.2 412.8h4v4h-4zM393.8 414.2h4v4h-4zM399.9 418.1h4v4h-4zM390.5 427.9h4v4h-4zM374.8 406.0h4v4h-4zM367.8 404.2h4v4h-4zM367.1 417.7h4v4h-4zM402.0 329.8h4v4h-4zM395.0 343.9h4v4h-4zM387.7 336.3h4v4h-4zM378.3 361.1h4v4h-4zM370.0 352.5h4v4h-4zM356.7 373.7h4v4h-4zM378.5 335.5h4v4h-4zM368.8 347.8h4v4h-4zM363.3 339.2h4v4h-4zM353.3 358.8h4v4h-4zM346.8 348.8h4v4h-4zM333.9 364.2h4v4h-4zM334.5 395.2h4v4h-4zM353.6 383.3h4v4h-4zM347.0 376.5h4v4h-4zM346.2 391.4h4v4h-4zM338.7 383.6h4v4h-4zM353.5 391.2h4v4h-4zM357.6 397.2h4v4h-4zM345.2 402.6h4v4h-4zM339.1 376.4h4v4h-4zM333.3 372.1h4v4h-4zM327.5 384.3h4v4h-4zM393.3 316.4h4v4h-4zM381.5 326.7h4v4h-4zM377.6 316.9h4v4h-4zM359.4 336.2h4v4h-4zM355.0 325.1h4v4h-4zM334.7 339.6h4v4h-4zM369.4 312.6h4v4h-4zM355.7 320.3h4v4h-4zM353.9 310.3h4v4h-4zM337.2 324.5h4v4h-4zM335.1 312.9h4v4h-4zM317.3 322.1h4v4h-4zM305.9 351.0h4v4h-4zM328.2 347.3h4v4h-4zM324.7 338.5h4v4h-4zM318.2 351.9h4v4h-4zM314.2 341.9h4v4h-4zM325.0 354.6h4v4h-4zM326.5 361.6h4v4h-4zM313.0 361.9h4v4h-4zM317.4 335.3h4v4h-4zM313.6 329.1h4v4h-4zM303.6 338.2h4v4h-4zM390.4 300.7h4v4h-4zM375.6 305.7h4v4h-4zM375.7 295.1h4v4h-4zM351.5 306.0h4v4h-4zM351.7 294.1h4v4h-4zM327.4 299.7h4v4h-4zM369.8 288.0h4v4h-4zM354.2 289.9h4v4h-4zM356.4 279.9h4v4h-4zM335.5 286.7h4v4h-4zM338.0 275.1h4v4h-4zM318.0 276.9h4v4h-4zM296.4 299.2h4v4h-4zM318.4 304.3h4v4h-4zM318.6 294.8h4v4h-4zM307.4 304.8h4v4h-4zM307.6 293.9h4v4h-4zM312.7 309.8h4v4h-4zM311.4 316.9h4v4h-4zM298.8 312.0h4v4h-4zM313.0 289.1h4v4h-4zM312.0 282.0h4v4h-4zM299.2 286.5h4v4h-4zM393.8 285.0h4v4h-4zM378.1 284.0h4v4h-4zM382.3 274.3h4v4h-4zM355.8 275.1h4v4h-4zM360.6 264.1h4v4h-4zM336.0 260.0h4v4h-4zM379.6 265.5h4v4h-4zM364.5 261.2h4v4h-4zM370.3 252.9h4v4h-4zM348.4 251.1h4v4h-4zM355.1 241.4h4v4h-4zM336.0 235.3h4v4h-4zM307.5 247.7h4v4h-4zM325.9 260.8h4v4h-4zM329.7 252.1h4v4h-4zM315.6 257.1h4v4h-4zM319.9 247.1h4v4h-4zM318.5 263.7h4v4h-4zM314.6 269.8h4v4h-4zM304.8 260.4h4v4h-4zM326.7 244.7h4v4h-4zM328.5 237.7h4v4h-4zM315.0 237.0h4v4h-4zM402.9 271.9h4v4h-4zM388.8 264.9h4v4h-4zM396.4 257.6h4v4h-4zM371.6 248.2h4v4h-4zM380.2 239.9h4v4h-4zM359.0 226.6h4v4h-4zM397.2 248.4h4v4h-4zM384.9 238.7h4v4h-4zM393.5 233.2h4v4h-4zM373.9 223.2h4v4h-4zM383.9 216.7h4v4h-4zM368.5 203.8h4v4h-4zM337.5 204.4h4v4h-4zM349.4 223.5h4v4h-4zM356.2 216.9h4v4h-4zM341.3 216.1h4v4h-4zM349.1 208.6h4v4h-4zM341.5 223.4h4v4h-4zM335.5 227.5h4v4h-4zM330.1 215.1h4v4h-4zM356.3 209.0h4v4h-4zM360.6 203.2h4v4h-4zM348.4 197.4h4v4h-4zM416.3 263.2h4v4h-4zM406.0 251.4h4v4h-4zM415.8 247.5h4v4h-4zM396.5 229.3h4v4h-4zM407.6 224.9h4v4h-4zM393.1 204.6h4v4h-4zM420.1 239.3h4v4h-4zM412.4 225.6h4v4h-4zM422.4 223.8h4v4h-4zM408.2 207.1h4v4h-4zM419.8 205.0h4v4h-4zM410.6 187.2h4v4h-4zM381.7 175.8h4v4h-4zM385.4 198.1h4v4h-4zM394.2 194.6h4v4h-4zM380.8 188.1h4v4h-4zM390.8 184.1h4v4h-4zM378.1 194.9h4v4h-4zM371.1 196.4h4v4h-4zM370.8 182.9h4v4h-4zM397.4 187.3h4v4h-4zM403.6 183.5h4v4h-4zM394.5 173.5h4v4h-4z" fill="#3a87dc"/></svg>
<div class="a" style="left:5.5px;top:42px;width:1.5px;height:1.5px;background:#c0c0c0;"></div>
<div class="a" style="left:8.5px;top:42px;width:1.5px;height:1.5px;background:#c0c0c0;"></div>
<div class="a" style="left:3px;top:111.5px;width:16px;height:15.5px;background:#2e2e2e;"></div>
<svg style="left:0;top:0" width="20" height="547"><path d="M12.8 62V73M7.3 67.5H18.3" stroke="#ddd" stroke-width="1.2"/><path d="M12.8 61L11 63.2H14.6ZM12.8 74L11 71.8H14.6ZM6.3 67.5L8.5 65.7V69.3ZM19.3 67.5L17.1 65.7V69.3Z" fill="#ddd"/><ellipse cx="12.8" cy="84" rx="5.5" ry="4.2" fill="none" stroke="#ccc" stroke-width="1" stroke-dasharray="1.6 1.2"/><ellipse cx="13" cy="98.5" rx="5.5" ry="3.8" fill="none" stroke="#d0d0d0" stroke-width="1.1"/><path d="M9.5 101.5Q8 104 10 106" fill="none" stroke="#d0d0d0" stroke-width="1.1"/><path d="M8.5 124.5L15.5 116.5" stroke="#e8e8e8" stroke-width="2.6" stroke-linecap="round"/><path d="M11.5 113V116M10 114.5H13M17 118.5V121M15.8 119.8H18.2" stroke="#e8e8e8" stroke-width="0.9"/><path d="M9 141L15.5 134.5" stroke="#d8d8d8" stroke-width="2.2" stroke-linecap="round"/><path d="M14.5 131.5L18 135" stroke="#d8d8d8" stroke-width="2.8"/><rect x="6" y="130.5" width="3" height="3" fill="#999"/><path d="M9 156L17 147" stroke="#d8d8d8" stroke-width="1.6"/><path d="M7.5 158.5Q8 155 10 155.5Q10.5 157.5 7.5 158.5Z" fill="#d8d8d8" stroke="#d8d8d8"/><rect x="7" y="169" width="11" height="3" fill="#d8d8d8"/><path d="M10.5 168V165M14.5 168V165" stroke="#d8d8d8" stroke-width="1.5"/><circle cx="12.5" cy="163" r="2.2" fill="#d8d8d8"/><path d="M7 188L12.5 182.5L17 187L14 190H9Z" fill="none" stroke="#d8d8d8" stroke-width="1.1"/><path d="M12.5 182.5L17 187L18.5 185.5L14 181Z" fill="#d8d8d8"/><path d="M9 201L13 197L18 202L14 206Z" fill="none" stroke="#d8d8d8" stroke-width="1.1"/><path d="M7 197Q7 200 8 201" fill="none" stroke="#d8d8d8"/><path d="M7.5 214.5H17.5V216.5M7.5 214.5V216.5M12.5 214.5V226M10.5 226H14.5" fill="none" stroke="#dadada" stroke-width="1.5"/><path d="M8 244L13 236L18 240L11 246Z" fill="none" stroke="#d8d8d8" stroke-width="1.1"/><path d="M7 246L9 244" stroke="#d8d8d8" stroke-width="1.2"/><path d="M10 250V261L12.5 258.5L15 263L16.5 262L14 257.5H17.5Z" fill="#1a1a1a" stroke="#ddd" stroke-width="0.9"/><rect x="7.5" y="270" width="11" height="8.5" fill="none" stroke="#d0d0d0" stroke-width="1.2"/><path d="M9 297V290Q9 288.5 10 288.5Q11 288.5 11 290V287.5Q11 286 12 286Q13 286 13 287.5V287Q13 285.5 14 285.5Q15 285.5 15 287V289Q15 288 16 288Q17 288 17 289.5V294Q17 299 13 299Q10.5 299 9 297Z" fill="#e0e0e0"/><circle cx="11.5" cy="306" r="3.8" fill="none" stroke="#d8d8d8" stroke-width="1.3"/><path d="M14.3 308.8L18 312.5" stroke="#d8d8d8" stroke-width="1.8"/><circle cx="8" cy="327.3" r="1.1" fill="#d8d8d8"/><circle cx="12.5" cy="327.3" r="1.1" fill="#d8d8d8"/><circle cx="17" cy="327.3" r="1.1" fill="#d8d8d8"/><rect x="5.5" y="341.5" width="3.5" height="3.5" fill="#eee"/><rect x="3.5" y="339.5" width="3.5" height="3.5" fill="#111" stroke="#eee" stroke-width="0.6"/><rect x="9" y="358" width="11" height="11" fill="#7a7a7a" stroke="#999" stroke-width="0.8"/><rect x="3" y="351.3" width="12" height="11.5" fill="#cdcdcd" stroke="#888" stroke-width="0.6"/><rect x="7" y="378" width="12" height="8" fill="none" stroke="#cfcfcf" stroke-width="1.1"/><circle cx="13" cy="382" r="2" fill="none" stroke="#cfcfcf" stroke-width="0.8"/><rect x="10" y="394.5" width="8" height="6" fill="none" stroke="#cfcfcf" stroke-width="1.1"/><rect x="7" y="397.5" width="8" height="6" fill="#535353" stroke="#cfcfcf" stroke-width="1.1"/></svg>
<div class="a" style="left:858px;top:41.5px;width:1.5px;height:1.5px;background:#c0c0c0;"></div>
<div class="a" style="left:861px;top:41.5px;width:1.5px;height:1.5px;background:#c0c0c0;"></div>
<div class="a" style="left:1017px;top:42px;width:1.5px;height:1.5px;background:#c0c0c0;"></div>
<div class="a" style="left:1020px;top:42px;width:1.5px;height:1.5px;background:#c0c0c0;"></div>
<div class="a" style="left:843px;top:47.5px;width:22px;height:1px;background:#3e3e3e;"></div>
<div class="a" style="left:843px;top:93.5px;width:22px;height:1px;background:#3e3e3e;"></div>
<div class="a" style="left:843px;top:120.5px;width:22px;height:1px;background:#3e3e3e;"></div>
<div class="a" style="left:843px;top:147.5px;width:22px;height:1px;background:#3e3e3e;"></div>
<div class="a" style="left:848px;top:50px;width:12px;height:1px;background:#5f5f5f;"></div>
<div class="a" style="left:848px;top:96px;width:12px;height:1px;background:#5f5f5f;"></div>
<div class="a" style="left:848px;top:123px;width:12px;height:1px;background:#5f5f5f;"></div>
<svg style="left:0;top:0" width="1024" height="547"><path d="M846.5 53.5V60.5M848 55H850M848 57.5H850M848 60H850" stroke="#ddd" stroke-width="0.9"/><path d="M851 63L859 54" stroke="#e6e6e6" stroke-width="1.6"/><path d="M848.5 66Q849 62 852 62.5Q852.5 65 848.5 66Z" fill="#e6e6e6" stroke="#e6e6e6"/><path d="M850 75.5H860M850 81.5H860M846 78.5H857" stroke="#e0e0e0" stroke-width="1.3"/><circle cx="848.5" cy="75.5" r="1.8" fill="#e0e0e0"/><path d="M858 78L862 81.5L858 85Z" fill="#e0e0e0"/><circle cx="854" cy="107.5" r="4.5" fill="none" stroke="#e0e0e0" stroke-width="1.3"/><path d="M848 104L852 100L852 107Z" fill="#e0e0e0"/><path d="M846 130L860 140M846 140L860 130" stroke="#e6e6e6" stroke-width="1.3"/><circle cx="847" cy="141" r="1.6" fill="#e6e6e6"/><circle cx="859" cy="141" r="1.6" fill="#e6e6e6"/></svg>
<div class="t" style="left:874.00px;top:52.50px;font-size:7.2px;color:#bdbdbd;">Color</div>
<div class="t" style="left:896.00px;top:52.50px;font-size:7.2px;color:#bdbdbd;">Swat</div>
<div class="t" style="left:918.00px;top:52.50px;font-size:7.2px;color:#bdbdbd;">Grad</div>
<div class="t" style="left:940.50px;top:52.50px;font-size:7.2px;color:#bdbdbd;">Patte</div>
<div class="t" style="left:962.00px;top:52.50px;font-size:7.4px;color:#f0f0f0;font-weight:bold;">Properties</div>
<div class="a" style="left:1016.5px;top:53.5px;width:5px;height:5px;background:#7a7a7a;"></div>
<div class="a" style="left:868px;top:88px;width:156px;height:1px;background:#474747;"></div>
<div class="a" style="left:876px;top:71.5px;width:13.5px;height:12.5px;background:#3a3a3a;"></div>
<svg style="left:877px;top:72.5px" width="12" height="11"><rect x="1.5" y="1.5" width="9" height="8" fill="none" stroke="#e0e0e0" stroke-width="1"/><path d="M2 9L5 5L7 7L8 6L10 9Z" fill="#e0e0e0"/></svg>
<div class="t" style="left:894.00px;top:74.80px;font-size:7.2px;color:#c4c4c4;">Pixel Layer</div>
<svg style="left:872px;top:95px" width="7" height="5"><path d="M0.7 0.7L3.5 3.5L6.3 0.7" stroke="#aaa" fill="none"/></svg>
<div class="t" style="left:884.50px;top:95.00px;font-size:7.4px;color:#eeeeee;font-weight:bold;">Transform</div>
<div class="a" style="left:874.5px;top:115.5px;width:15.5px;height:16px;background:#3a3a3a;"></div>
<svg style="left:878px;top:118px" width="9" height="11"><circle cx="4.5" cy="3" r="2" fill="none" stroke="#ddd" stroke-width="1.1"/><circle cx="4.5" cy="8" r="2" fill="none" stroke="#ddd" stroke-width="1.1"/></svg>
<div class="t" style="left:897.50px;top:111.50px;font-size:7px;color:#c8c8c8;">W</div>
<div class="t" style="left:897.50px;top:127.50px;font-size:7px;color:#c8c8c8;">H</div>
<div class="a" style="left:908px;top:110.5px;width:34px;height:9.5px;background:#444444;"></div>
<div class="a" style="left:908px;top:126.8px;width:34px;height:9.5px;background:#444444;"></div>
<div class="t" style="left:910.50px;top:112.30px;font-size:7px;color:#dedede;">16.57 cm</div>
<div class="t" style="left:910.50px;top:128.30px;font-size:7px;color:#dedede;">16.57 cm</div>
<div class="t" style="left:954.50px;top:111.50px;font-size:7px;color:#c8c8c8;">X</div>
<div class="t" style="left:954.50px;top:127.50px;font-size:7px;color:#c8c8c8;">Y</div>
<div class="a" style="left:963.5px;top:110.5px;width:33px;height:9.5px;background:#444444;"></div>
<div class="a" style="left:963.5px;top:126.8px;width:33px;height:9.5px;background:#444444;"></div>
<div class="t" style="left:966.00px;top:112.30px;font-size:7px;color:#dedede;">0 cm</div>
<div class="t" style="left:966.00px;top:128.30px;font-size:7px;color:#dedede;">0 cm</div>
<svg style="left:0;top:0" width="1024" height="547"><path d="M895 155L903 147M895 155H904M899 155Q899 151 897 151" fill="none" stroke="#c8c8c8" stroke-width="0.9"/><path d="M966 147V156M971 147V156" stroke="#c8c8c8" stroke-width="0.8" stroke-dasharray="1 1"/><path d="M967 151.5L970 148.5V154.5Z" fill="#ddd"/><path d="M976 148L972 151.5L976 155Z" fill="#ddd"/><path d="M985 147.5H994L989.5 151Z" fill="none" stroke="#ddd" stroke-width="0.9"/><path d="M985 156H994L989.5 152.5Z" fill="#ddd"/><path d="M985 151.7H994" stroke="#ccc" stroke-width="0.6"/><path d="M936.5 150L938.5 152L940.5 150" stroke="#aaa" fill="none" stroke-width="0.8"/></svg>
<div class="a" style="left:908.5px;top:146.5px;width:25px;height:8.5px;background:#444444;"></div>
<div class="a" style="left:934px;top:146.5px;width:8.5px;height:8.5px;background:#444444;"></div>
<div class="t" style="left:910.50px;top:147.50px;font-size:7px;color:#dedede;">0.00&#176;</div>
<div class="a" style="left:868px;top:165.5px;width:148px;height:1px;background:#474747;"></div>
<svg style="left:872px;top:172px" width="7" height="5"><path d="M0.7 0.7L3.5 3.5L6.3 0.7" stroke="#aaa" fill="none"/></svg>
<div class="t" style="left:884.00px;top:173.30px;font-size:7.4px;color:#eeeeee;font-weight:bold;">Align and Distribute</div>
<div class="a" style="left:868px;top:185.5px;width:148px;height:1px;background:#4c4c4c;"></div>
<div class="t" style="left:874.50px;top:189.50px;font-size:6.8px;color:#9a9a9a;">Align:</div>
<div class="a" style="left:1015.5px;top:93px;width:8px;height:98px;background:#4a4a4a;"></div>
<div class="a" style="left:1016px;top:128px;width:7px;height:13px;background:#6a6a6a;"></div>
<div class="t" style="left:874.00px;top:218.50px;font-size:7.4px;color:#f0f0f0;font-weight:bold;">History</div>
<div class="a" style="left:1016.5px;top:219.5px;width:5px;height:5px;background:#7a7a7a;"></div>
<div class="a" style="left:884.5px;top:235px;width:6px;height:2px;background:#e8e8e8;"></div>
<div class="a" style="left:892px;top:235px;width:3px;height:2px;background:#e8e8e8;"></div>
<div class="a" style="left:896.5px;top:235px;width:3px;height:2px;background:#e8e8e8;"></div>
<div class="a" style="left:900.5px;top:235px;width:5px;height:2px;background:#e8e8e8;"></div>
<div class="a" style="left:868px;top:240px;width:148px;height:1px;background:#474747;"></div>
<div class="a" style="left:868px;top:255.5px;width:148px;height:1px;background:#4d4d4d;"></div>
<div class="a" style="left:868px;top:272.5px;width:146px;height:15.5px;background:#696969;"></div>
<div class="t" style="left:907.00px;top:245.30px;font-size:7.2px;color:#d0d0d0;">Open</div>
<div class="t" style="left:907.00px;top:260.30px;font-size:7.2px;color:#d0d0d0;">Magic Wand</div>
<div class="t" style="left:907.00px;top:276.50px;font-size:7.2px;color:#dedede;">Make Path</div>
<svg style="left:0;top:0" width="1024" height="547"><rect x="889" y="244.5" width="10.5" height="10" fill="#bdbdbd"/><rect x="890.5" y="247.0" width="7.5" height="6" fill="#8a8a8a"/><path d="M890.5 249.0H898M890.5 251.0H898" stroke="#cfcfcf" stroke-width="0.6"/><rect x="889" y="275.5" width="10.5" height="10" fill="#bdbdbd"/><rect x="890.5" y="278.0" width="7.5" height="6" fill="#8a8a8a"/><path d="M890.5 280.0H898M890.5 282.0H898" stroke="#cfcfcf" stroke-width="0.6"/><path d="M889.5 268.5L897 261" stroke="#e8e8e8" stroke-width="1.8"/><path d="M896 258V260.5M894.8 259.2H897.2M899.5 261V263M898.5 262H900.5" stroke="#e8e8e8" stroke-width="0.7"/><rect x="872" y="244" width="9" height="10" fill="none" stroke="#4a4a4a" stroke-width="0.8"/><rect x="872" y="259.5" width="9" height="10" fill="none" stroke="#4a4a4a" stroke-width="0.8"/><rect x="872" y="275" width="9" height="10" fill="none" stroke="#777" stroke-width="0.8"/><path d="M957 296H963M960 293V299" stroke="#ddd" stroke-width="1.5"/><rect x="958.5" y="292" width="6" height="6" fill="#cfcfcf"/><path d="M955 297H961M958 294V300" stroke="#fff" stroke-width="1.8"/><rect x="977.5" y="293" width="10.5" height="7.5" rx="1" fill="#dedede"/><rect x="980.5" y="291.5" width="4.5" height="2" fill="#dedede"/><circle cx="982.8" cy="296.8" r="2.2" fill="#535353"/><rect x="999.5" y="292.5" width="7" height="9" fill="#a8a8a8"/><rect x="998.5" y="291" width="9" height="1.3" fill="#a8a8a8"/></svg>
<div class="a" style="left:1015.5px;top:240px;width:8px;height:48px;background:#484848;"></div>
<div class="a" style="left:1016px;top:254.5px;width:7px;height:22px;background:#646464;"></div>
<div class="t" style="left:874.00px;top:311.70px;font-size:7.2px;color:#bdbdbd;">Layers</div>
<div class="t" style="left:906.00px;top:311.70px;font-size:7.2px;color:#bdbdbd;">Channels</div>
<div class="t" style="left:946.00px;top:311.70px;font-size:7.4px;color:#f0f0f0;font-weight:bold;">Paths</div>
<div class="a" style="left:1016.5px;top:313px;width:5px;height:5px;background:#7a7a7a;"></div>
<div class="a" style="left:868px;top:328px;width:146px;height:25px;background:#696969;"></div>
<div class="a" style="left:870.5px;top:330px;width:21px;height:21px;background:#3a3a3a;"></div>
<svg style="left:870.5px;top:330px" width="21" height="21"><rect x="0" y="0" width="21" height="21" fill="#7a7a7a"/><circle cx="10.5" cy="10.5" r="9.3" fill="#0c0c0c"/><circle cx="10.5" cy="10.5" r="3.2" fill="#6a6a6a"/><circle cx="10.5" cy="10.5" r="9" fill="none" stroke="#cfcfcf" stroke-width="0.8" stroke-dasharray="1.2 1.6"/><circle cx="10.5" cy="10.5" r="6" fill="none" stroke="#666" stroke-width="1" stroke-dasharray="1 1.2"/></svg>
<div class="t" style="left:896.00px;top:336.30px;font-size:7.3px;color:#e0e0e0;font-style:italic;">Work Path</div>
<svg style="left:0;top:0" width="1024" height="547"><circle cx="893" cy="541.5" r="3.3" fill="#e6e6e6"/><circle cx="910.5" cy="541.5" r="3" fill="none" stroke="#d8d8d8" stroke-width="1.1"/><circle cx="929" cy="541.5" r="3.4" fill="none" stroke="#d8d8d8" stroke-width="1" stroke-dasharray="1.3 1"/><path d="M947 537.5L951 541.5L947 545.5L943 541.5Z" fill="none" stroke="#d8d8d8" stroke-width="1.1"/><rect x="960" y="538" width="10" height="7" fill="#e0e0e0"/><circle cx="965" cy="541.5" r="2.2" fill="#535353"/><rect x="980.5" y="537" width="8" height="8.5" fill="none" stroke="#d8d8d8" stroke-width="1"/><path d="M982.5 541.3H986.5M984.5 539.3V543.3" stroke="#d8d8d8" stroke-width="1"/><rect x="999.5" y="538" width="7" height="8.5" fill="none" stroke="#aaa" stroke-width="1"/><rect x="998.5" y="536.5" width="9" height="1.2" fill="#aaa"/></svg>
<div class="t" style="left:186.50px;top:46.20px;font-size:7.6px;color:#e8e8e8;font-weight:bold;">ayer 1, RGB/8) *</div>
<svg style="left:249px;top:45px" width="7" height="7"><path d="M1.5 1.5L5.5 5.5M5.5 1.5L1.5 5.5" stroke="#7a7a7a" stroke-width="0.8"/></svg>
<div class="a" style="left:20px;top:14.7px;width:167px;height:387.5px;background:rgba(0,0,0,0.35);filter:blur(1px)"></div>
<div class="a" style="left:19px;top:13.7px;width:167px;height:387.5px;background:#f0f0f0;border:1px solid #c8c8c8;border-top:none"></div>
<div class="a" style="left:21px;top:90.7px;width:163px;height:1px;background:#d8d8d8;"></div>
<div class="a" style="left:21px;top:181.0px;width:163px;height:1px;background:#d8d8d8;"></div>
<div class="a" style="left:21px;top:237.8px;width:163px;height:1px;background:#d8d8d8;"></div>
<div class="a" style="left:21px;top:292.4px;width:163px;height:1px;background:#d8d8d8;"></div>
<div class="a" style="left:21px;top:334.8px;width:163px;height:1px;background:#d8d8d8;"></div>
<div class="a" style="left:21px;top:353.8px;width:163px;height:1px;background:#d8d8d8;"></div>
<div class="a" style="left:21px;top:383.5px;width:163px;height:1px;background:#d8d8d8;"></div>
<div class="a" style="left:18px;top:183.4px;width:166px;height:17.6px;background:#1671d6;border:2.6px solid #c42a3e"></div>
<div class="t" style="left:32.20px;top:17.50px;font-size:8.2px;color:#262626;transform:scaleX(0.93);transform-origin:0 0;-webkit-text-stroke:0.22px #262626">New...</div>
<div class="t" style="left:-126.00px;width:300px;text-align:right;top:17.50px;font-size:8.2px;color:#262626;transform:scaleX(0.99);transform-origin:100% 0;-webkit-text-stroke:0.22px #262626">Ctrl+N</div>
<div class="t" style="left:32.20px;top:29.70px;font-size:8.2px;color:#262626;transform:scaleX(0.93);transform-origin:0 0;-webkit-text-stroke:0.22px #262626">Open...</div>
<div class="t" style="left:-126.00px;width:300px;text-align:right;top:29.70px;font-size:8.2px;color:#262626;transform:scaleX(0.99);transform-origin:100% 0;-webkit-text-stroke:0.22px #262626">Ctrl+O</div>
<div class="t" style="left:32.20px;top:42.20px;font-size:8.2px;color:#262626;transform:scaleX(0.93);transform-origin:0 0;-webkit-text-stroke:0.22px #262626">Browse in Bridge...</div>
<div class="t" style="left:-126.00px;width:300px;text-align:right;top:42.20px;font-size:8.2px;color:#262626;transform:scaleX(0.99);transform-origin:100% 0;-webkit-text-stroke:0.22px #262626">Alt+Ctrl+O</div>
<div class="t" style="left:32.20px;top:54.40px;font-size:8.2px;color:#262626;transform:scaleX(0.93);transform-origin:0 0;-webkit-text-stroke:0.22px #262626">Open As...</div>
<div class="t" style="left:-126.00px;width:300px;text-align:right;top:54.40px;font-size:8.2px;color:#262626;transform:scaleX(0.99);transform-origin:100% 0;-webkit-text-stroke:0.22px #262626">Alt+Shift+Ctrl+O</div>
<div class="t" style="left:32.20px;top:66.80px;font-size:8.2px;color:#262626;transform:scaleX(0.93);transform-origin:0 0;-webkit-text-stroke:0.22px #262626">Open as Smart Object...</div>
<div class="t" style="left:32.20px;top:79.50px;font-size:8.2px;color:#262626;transform:scaleX(0.93);transform-origin:0 0;-webkit-text-stroke:0.22px #262626">Open Recent</div>
<svg style="left:177px;top:78.5px" width="5" height="7"><path d="M0.5 0.5L4 3.5L0.5 6.5Z" fill="#111"/></svg>
<div class="t" style="left:32.20px;top:97.20px;font-size:8.2px;color:#262626;transform:scaleX(0.93);transform-origin:0 0;-webkit-text-stroke:0.22px #262626">Close</div>
<div class="t" style="left:-126.00px;width:300px;text-align:right;top:97.20px;font-size:8.2px;color:#262626;transform:scaleX(0.99);transform-origin:100% 0;-webkit-text-stroke:0.22px #262626">Ctrl+W</div>
<div class="t" style="left:32.20px;top:109.50px;font-size:8.2px;color:#262626;transform:scaleX(0.93);transform-origin:0 0;-webkit-text-stroke:0.22px #262626">Close All</div>
<div class="t" style="left:-126.00px;width:300px;text-align:right;top:109.50px;font-size:8.2px;color:#262626;transform:scaleX(0.99);transform-origin:100% 0;-webkit-text-stroke:0.22px #262626">Alt+Ctrl+W</div>
<div class="t" style="left:32.20px;top:121.70px;font-size:8.2px;color:#a4a4a4;transform:scaleX(0.93);transform-origin:0 0;-webkit-text-stroke:0.22px #a4a4a4">Close Others</div>
<div class="t" style="left:-126.00px;width:300px;text-align:right;top:121.70px;font-size:8.2px;color:#a4a4a4;transform:scaleX(0.99);transform-origin:100% 0;-webkit-text-stroke:0.22px #a4a4a4">Alt+Ctrl+P</div>
<div class="t" style="left:32.20px;top:134.00px;font-size:8.2px;color:#262626;transform:scaleX(0.93);transform-origin:0 0;-webkit-text-stroke:0.22px #262626">Close and Go to Bridge...</div>
<div class="t" style="left:-126.00px;width:300px;text-align:right;top:134.00px;font-size:8.2px;color:#262626;transform:scaleX(0.99);transform-origin:100% 0;-webkit-text-stroke:0.22px #262626">Shift+Ctrl+W</div>
<div class="t" style="left:32.20px;top:146.40px;font-size:8.2px;color:#262626;transform:scaleX(0.93);transform-origin:0 0;-webkit-text-stroke:0.22px #262626">Save</div>
<div class="t" style="left:-126.00px;width:300px;text-align:right;top:146.40px;font-size:8.2px;color:#262626;transform:scaleX(0.99);transform-origin:100% 0;-webkit-text-stroke:0.22px #262626">Ctrl+S</div>
<div class="t" style="left:32.20px;top:158.80px;font-size:8.2px;color:#262626;transform:scaleX(0.93);transform-origin:0 0;-webkit-text-stroke:0.22px #262626">Save As...</div>
<div class="t" style="left:-126.00px;width:300px;text-align:right;top:158.80px;font-size:8.2px;color:#262626;transform:scaleX(0.99);transform-origin:100% 0;-webkit-text-stroke:0.22px #262626">Shift+Ctrl+S</div>
<div class="t" style="left:32.20px;top:171.20px;font-size:8.2px;color:#262626;transform:scaleX(0.93);transform-origin:0 0;-webkit-text-stroke:0.22px #262626">Revert</div>
<div class="t" style="left:-126.00px;width:300px;text-align:right;top:171.20px;font-size:8.2px;color:#262626;transform:scaleX(0.99);transform-origin:100% 0;-webkit-text-stroke:0.22px #262626">F12</div>
<div class="t" style="left:32.20px;top:190.00px;font-size:8.2px;color:#ffffff;transform:scaleX(0.93);transform-origin:0 0;-webkit-text-stroke:0.22px #ffffff">Export</div>
<svg style="left:177px;top:189.0px" width="5" height="7"><path d="M0.5 0.5L4 3.5L0.5 6.5Z" fill="#fff"/></svg>
<div class="t" style="left:32.20px;top:201.90px;font-size:8.2px;color:#262626;transform:scaleX(0.93);transform-origin:0 0;-webkit-text-stroke:0.22px #262626">Generate</div>
<svg style="left:177px;top:200.9px" width="5" height="7"><path d="M0.5 0.5L4 3.5L0.5 6.5Z" fill="#111"/></svg>
<div class="t" style="left:32.20px;top:213.90px;font-size:8.2px;color:#262626;transform:scaleX(0.93);transform-origin:0 0;-webkit-text-stroke:0.22px #262626">Share...</div>
<div class="t" style="left:32.20px;top:225.90px;font-size:8.2px;color:#262626;transform:scaleX(0.93);transform-origin:0 0;-webkit-text-stroke:0.22px #262626">Share on Behance...</div>
<div class="t" style="left:32.20px;top:243.80px;font-size:8.2px;color:#262626;transform:scaleX(0.93);transform-origin:0 0;-webkit-text-stroke:0.22px #262626">Search Adobe Stock...</div>
<div class="t" style="left:32.20px;top:256.20px;font-size:8.2px;color:#262626;transform:scaleX(0.93);transform-origin:0 0;-webkit-text-stroke:0.22px #262626">Place Embedded...</div>
<div class="t" style="left:32.20px;top:268.50px;font-size:8.2px;color:#262626;transform:scaleX(0.93);transform-origin:0 0;-webkit-text-stroke:0.22px #262626">Place Linked...</div>
<div class="t" style="left:32.20px;top:280.70px;font-size:8.2px;color:#a4a4a4;transform:scaleX(0.93);transform-origin:0 0;-webkit-text-stroke:0.22px #a4a4a4">Package...</div>
<div class="t" style="left:32.20px;top:299.70px;font-size:8.2px;color:#262626;transform:scaleX(0.93);transform-origin:0 0;-webkit-text-stroke:0.22px #262626">Automate</div>
<svg style="left:177px;top:298.7px" width="5" height="7"><path d="M0.5 0.5L4 3.5L0.5 6.5Z" fill="#111"/></svg>
<div class="t" style="left:32.20px;top:312.20px;font-size:8.2px;color:#262626;transform:scaleX(0.93);transform-origin:0 0;-webkit-text-stroke:0.22px #262626">Scripts</div>
<svg style="left:177px;top:311.2px" width="5" height="7"><path d="M0.5 0.5L4 3.5L0.5 6.5Z" fill="#111"/></svg>
<div class="t" style="left:32.20px;top:324.00px;font-size:8.2px;color:#262626;transform:scaleX(0.93);transform-origin:0 0;-webkit-text-stroke:0.22px #262626">Import</div>
<svg style="left:177px;top:323.0px" width="5" height="7"><path d="M0.5 0.5L4 3.5L0.5 6.5Z" fill="#111"/></svg>
<div class="t" style="left:32.20px;top:341.80px;font-size:8.2px;color:#262626;transform:scaleX(0.93);transform-origin:0 0;-webkit-text-stroke:0.22px #262626">File Info...</div>
<div class="t" style="left:-126.00px;width:300px;text-align:right;top:341.80px;font-size:8.2px;color:#262626;transform:scaleX(0.99);transform-origin:100% 0;-webkit-text-stroke:0.22px #262626">Alt+Shift+Ctrl+I</div>
<div class="t" style="left:32.20px;top:360.00px;font-size:8.2px;color:#262626;transform:scaleX(0.93);transform-origin:0 0;-webkit-text-stroke:0.22px #262626">Print...</div>
<div class="t" style="left:-126.00px;width:300px;text-align:right;top:360.00px;font-size:8.2px;color:#262626;transform:scaleX(0.99);transform-origin:100% 0;-webkit-text-stroke:0.22px #262626">Ctrl+P</div>
<div class="t" style="left:32.20px;top:371.80px;font-size:8.2px;color:#262626;transform:scaleX(0.93);transform-origin:0 0;-webkit-text-stroke:0.22px #262626">Print One Copy</div>
<div class="t" style="left:-126.00px;width:300px;text-align:right;top:371.80px;font-size:8.2px;color:#262626;transform:scaleX(0.99);transform-origin:100% 0;-webkit-text-stroke:0.22px #262626">Alt+Shift+Ctrl+P</div>
<div class="t" style="left:32.20px;top:389.80px;font-size:8.2px;color:#262626;transform:scaleX(0.93);transform-origin:0 0;-webkit-text-stroke:0.22px #262626">Exit</div>
<div class="t" style="left:-126.00px;width:300px;text-align:right;top:389.80px;font-size:8.2px;color:#262626;transform:scaleX(0.99);transform-origin:100% 0;-webkit-text-stroke:0.22px #262626">Ctrl+Q</div>
<div class="a" style="left:185px;top:186px;width:175.5px;height:210px;background:rgba(0,0,0,0.35);filter:blur(1px)"></div>
<div class="a" style="left:184px;top:185px;width:175.5px;height:210px;background:#f0f0f0;border:1px solid #c8c8c8"></div>
<div class="a" style="left:186px;top:212.9px;width:171.5px;height:1px;background:#d8d8d8;"></div>
<div class="a" style="left:186px;top:231.9px;width:171.5px;height:1px;background:#d8d8d8;"></div>
<div class="a" style="left:186px;top:249.8px;width:171.5px;height:1px;background:#d8d8d8;"></div>
<div class="a" style="left:186px;top:341.0px;width:171.5px;height:1px;background:#d8d8d8;"></div>
<div class="a" style="left:183.3px;top:354.9px;width:177.3px;height:15.8px;background:#1671d6;border:2.7px solid #c42a3e"></div>
<div class="t" style="left:196.00px;top:189.00px;font-size:8.2px;color:#262626;transform:scaleX(0.93);transform-origin:0 0;-webkit-text-stroke:0.22px #262626">Quick Export as PNG</div>
<div class="t" style="left:196.00px;top:201.20px;font-size:8.2px;color:#262626;transform:scaleX(0.93);transform-origin:0 0;-webkit-text-stroke:0.22px #262626">Export As...</div>
<div class="t" style="left:47.00px;width:300px;text-align:right;top:201.20px;font-size:8.2px;color:#262626;transform:scaleX(0.99);transform-origin:100% 0;-webkit-text-stroke:0.22px #262626">Alt+Shift+Ctrl+W</div>
<div class="t" style="left:196.00px;top:219.70px;font-size:8.2px;color:#262626;transform:scaleX(0.93);transform-origin:0 0;-webkit-text-stroke:0.22px #262626">Export Preferences...</div>
<div class="t" style="left:196.00px;top:237.90px;font-size:8.2px;color:#262626;transform:scaleX(0.93);transform-origin:0 0;-webkit-text-stroke:0.22px #262626">Save for Web (Legacy)...</div>
<div class="t" style="left:47.00px;width:300px;text-align:right;top:237.90px;font-size:8.2px;color:#262626;transform:scaleX(0.99);transform-origin:100% 0;-webkit-text-stroke:0.22px #262626">Alt+Shift+Ctrl+S</div>
<div class="t" style="left:196.00px;top:255.80px;font-size:8.2px;color:#a4a4a4;transform:scaleX(0.93);transform-origin:0 0;-webkit-text-stroke:0.22px #a4a4a4">Artboards to Files...</div>
<div class="t" style="left:196.00px;top:267.90px;font-size:8.2px;color:#a4a4a4;transform:scaleX(0.93);transform-origin:0 0;-webkit-text-stroke:0.22px #a4a4a4">Artboards to PDF...</div>
<div class="t" style="left:196.00px;top:280.90px;font-size:8.2px;color:#262626;transform:scaleX(0.93);transform-origin:0 0;-webkit-text-stroke:0.22px #262626">Export For Aero...</div>
<div class="t" style="left:196.00px;top:293.00px;font-size:8.2px;color:#a4a4a4;transform:scaleX(0.93);transform-origin:0 0;-webkit-text-stroke:0.22px #a4a4a4">Layer Comps to Files...</div>
<div class="t" style="left:196.00px;top:305.40px;font-size:8.2px;color:#a4a4a4;transform:scaleX(0.93);transform-origin:0 0;-webkit-text-stroke:0.22px #a4a4a4">Layer Comps to PDF...</div>
<div class="t" style="left:196.00px;top:317.20px;font-size:8.2px;color:#262626;transform:scaleX(0.93);transform-origin:0 0;-webkit-text-stroke:0.22px #262626">Layers to Files...</div>
<div class="t" style="left:196.00px;top:329.20px;font-size:8.2px;color:#262626;transform:scaleX(0.93);transform-origin:0 0;-webkit-text-stroke:0.22px #262626">Color Lookup Tables...</div>
<div class="t" style="left:196.00px;top:346.90px;font-size:8.2px;color:#a4a4a4;transform:scaleX(0.93);transform-origin:0 0;-webkit-text-stroke:0.22px #a4a4a4">Data Sets as Files...</div>
<div class="t" style="left:196.00px;top:359.40px;font-size:8.2px;color:#ffffff;transform:scaleX(0.93);transform-origin:0 0;-webkit-text-stroke:0.22px #ffffff">Paths to Illustrator...</div>
<div class="t" style="left:196.00px;top:371.90px;font-size:8.2px;color:#262626;transform:scaleX(0.93);transform-origin:0 0;-webkit-text-stroke:0.22px #262626">Render Video...</div>
<div class="t" style="left:196.00px;top:384.20px;font-size:8.2px;color:#262626;transform:scaleX(0.93);transform-origin:0 0;-webkit-text-stroke:0.22px #262626">Zoomify...</div>
</body></html>
